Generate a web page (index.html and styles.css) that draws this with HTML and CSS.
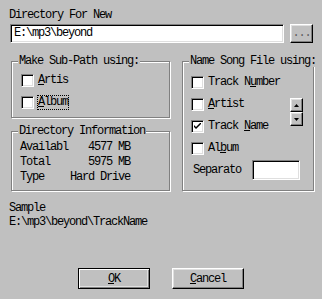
FILE: index.html
```html
<!DOCTYPE html>
<html lang="en">
<head>
    <meta charset="UTF-8">
    <meta name="viewport" content="width=device-width, initial-scale=1.0">
    <title>Directory For New</title>
    <link rel="stylesheet" href="styles.css">
</head>
<body>

<div class="dialog">
    <div class="caption">Directory For New</div>

    <div class="path-row">
        <div class="field path">E:\mp3\beyond</div>
        <button class="btn browse">...</button>
    </div>

    <div class="groups">
        <div class="col-left">
            <!-- Sub-path options -->
            <div class="group sub-path">
                <span class="group-title">Make Sub-Path using:</span>
                <label class="check"><span class="box"></span><span><u>A</u>rtis</span></label>
                <label class="check"><span class="box"></span><span class="focus"><u>A</u>lbum</span></label>
            </div>

            <!-- Drive info -->
            <div class="group dir-info">
                <span class="group-title">Directory Information</span>
                <div class="info-grid">
                    <span>Availabl</span><span class="val">4577 MB</span>
                    <span>Total</span><span class="val">5975 MB</span>
                    <span>Type</span><span class="val">Hard Drive</span>
                </div>
            </div>
        </div>

        <!-- File name options -->
        <div class="group name-song">
            <span class="group-title">Name Song File using:</span>
            <div class="song-row">
                <div class="song-list">
                    <label class="check"><span class="box"></span><span>Track N<u>u</u>mber</span></label>
                    <label class="check"><span class="box"></span><span><u>A</u>rtist</span></label>
                    <label class="check"><span class="box checked">
                        <svg width="7" height="7" viewBox="0 0 7 7"><path d="M0 2 L0 4 L2 6 L7 1 L7 -1 L2 4 Z" fill="#000"/></svg>
                    </span><span>Track <u>N</u>ame</span></label>
                    <label class="check"><span class="box"></span><span>Al<u>b</u>um</span></label>
                </div>
                <div class="spin">
                    <button class="btn spin-btn">
                        <svg width="5" height="3" viewBox="0 0 5 3"><path d="M2.5 0 L5 3 L0 3 Z" fill="#000"/></svg>
                    </button>
                    <button class="btn spin-btn">
                        <svg width="5" height="3" viewBox="0 0 5 3"><path d="M0 0 L5 0 L2.5 3 Z" fill="#000"/></svg>
                    </button>
                </div>
            </div>
            <div class="sep-row">
                <span>Separato</span>
                <div class="field sep"></div>
            </div>
        </div>
    </div>

    <div class="sample">
        <div>Sample</div>
        <div>E:\mp3\beyond\TrackName</div>
    </div>

    <div class="actions">
        <button class="btn default"><u>O</u>K</button>
        <button class="btn"><u>C</u>ancel</button>
    </div>
</div>

</body>
</html>
```

FILE: styles.css
```css
body {
    margin: 0;
    background-color: #c0c0c0;
    font-family: 'Liberation Mono', monospace;
    font-size: 12px;
    letter-spacing: -1.2px;
    color: #000;
    white-space: nowrap;
}

.dialog {
    width: 322px;
    height: 299px;
    box-sizing: border-box;
    padding: 9px 9px 0 9px;
}

.caption {
    line-height: 12px;
}

.path-row {
    display: flex;
    gap: 6px;
    margin-top: 3px;
    margin-left: 1px;
}

/* sunken white box: inputs and checkboxes */
.field,
.box {
    background-color: #fff;
    border: 1px solid;
    border-color: #808080 #fff #fff #808080;
    box-shadow: inset 1px 1px 0 #000, inset -1px -1px 0 #dfdfdf;
    box-sizing: border-box;
}

.path {
    flex: 1;
    height: 19px;
    line-height: 17px;
    padding-left: 3px;
}

/* raised buttons */
.btn {
    font-family: inherit;
    font-size: 12px;
    letter-spacing: -1.2px;
    color: #000;
    background-color: #c0c0c0;
    border: 1px solid;
    border-color: #fff #000 #000 #fff;
    box-shadow: inset -1px -1px 0 #808080, inset 1px 1px 0 #dfdfdf;
    padding: 0;
    margin: 0;
    box-sizing: border-box;
}

.browse {
    width: 23px;
    height: 19px;
    color: #606060;
    line-height: 15px;
}

.groups {
    display: grid;
    grid-template-columns: 159px 1fr;
    column-gap: 12px;
    margin-top: 18px;
    margin-left: 2px;
    margin-right: -1px;
}

.col-left {
    display: flex;
    flex-direction: column;
    gap: 13px;
}

/* etched group frame */
.group {
    position: relative;
    border: 1px solid #808080;
    box-shadow: inset 1px 1px 0 #fff, 1px 1px 0 #fff;
    box-sizing: border-box;
}

.group-title {
    position: absolute;
    top: -7px;
    left: 6px;
    padding: 0 1px;
    line-height: 12px;
    background-color: #c0c0c0;
}

.sub-path {
    height: 57px;
    padding: 12px 0 0 9px;
}

.check {
    display: flex;
    align-items: center;
    gap: 4px;
    height: 13px;
    line-height: 13px;
    margin-bottom: 9px;
}

.box {
    width: 13px;
    height: 13px;
    flex: none;
    display: flex;
    align-items: center;
    justify-content: center;
}

.focus {
    outline: 1px dotted #000;
    outline-offset: 0;
}

.dir-info {
    height: 60px;
    padding: 8px 0 0 8px;
}

.info-grid {
    display: grid;
    grid-template-columns: 50px 60px;
    line-height: 15px;
}

.val {
    text-align: right;
}

.name-song {
    height: 130px;
    padding: 14px 10px 0 8px;
}

.song-row {
    display: flex;
    justify-content: space-between;
}

.song-list .check:last-child {
    margin-bottom: 5px;
}

.spin {
    display: flex;
    flex-direction: column;
    margin-top: 22px;
}

.spin-btn {
    width: 13px;
    height: 14px;
    display: flex;
    align-items: center;
    justify-content: center;
}

.sep-row {
    display: flex;
    align-items: center;
    gap: 11px;
    padding-left: 2px;
}

.sep {
    width: 48px;
    height: 20px;
}

.sample {
    margin-top: 10px;
    line-height: 14px;
}

.actions {
    display: flex;
    justify-content: center;
    gap: 22px;
    margin-top: 39px;
}

.actions .btn {
    width: 72px;
    height: 21px;
}

.actions .default {
    border-color: #000;
    box-shadow: inset 1px 1px 0 #fff, inset -1px -1px 0 #808080, inset -2px -2px 0 #dfdfdf;
}

u {
    text-decoration-thickness: 1px;
    text-underline-offset: 1px;
}
```
